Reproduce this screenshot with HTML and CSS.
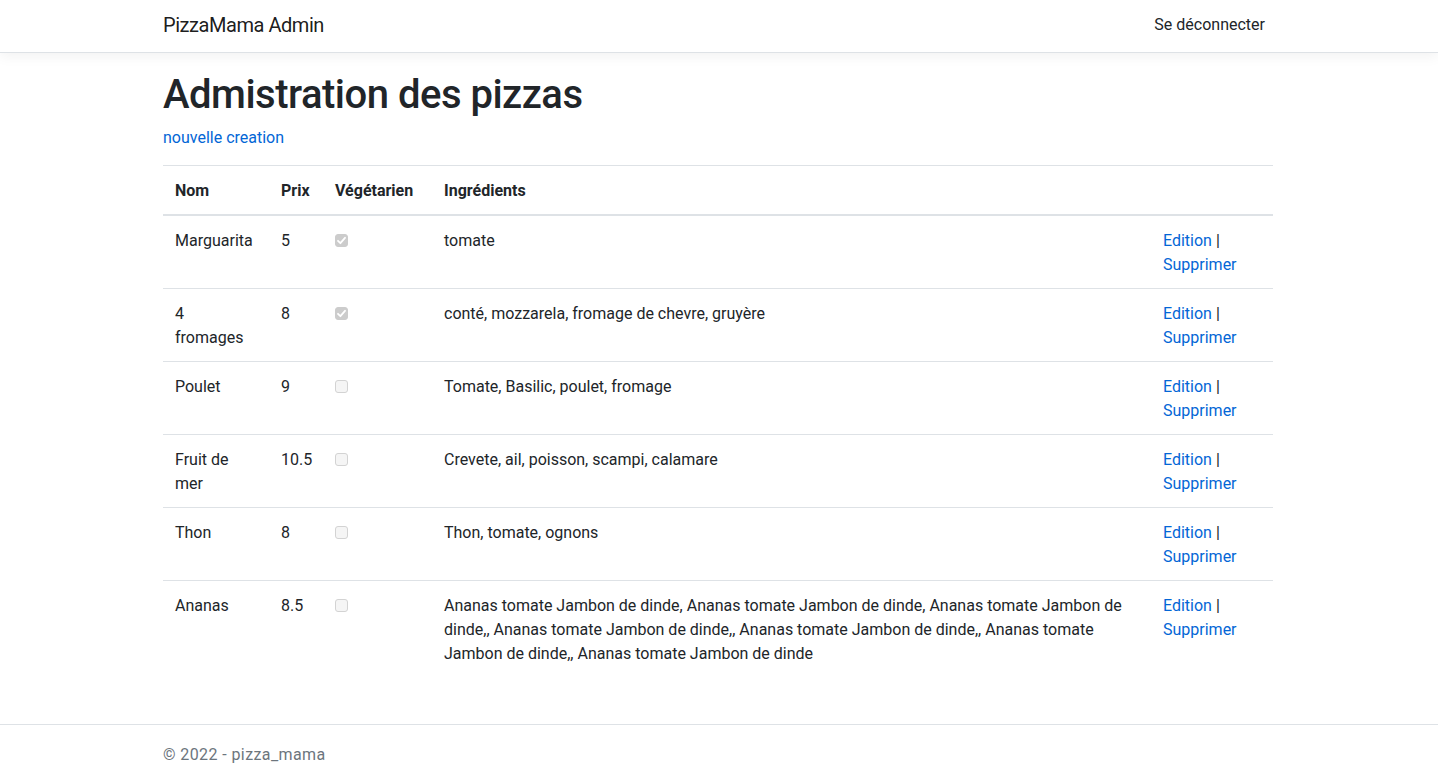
FILE: index.html
```html
<!DOCTYPE html>
<html lang="fr">
<head>
<meta charset="utf-8">
<title>PizzaMama Admin</title>
<link rel="stylesheet" href="styles.css">
</head>
<body>
<header class="navbar">
  <div class="container nav-inner">
    <a class="brand" href="#">PizzaMama Admin</a>
    <a class="nav-link" href="#">Se déconnecter</a>
  </div>
</header>
<main class="container main">
  <h1 class="title">Admistration des pizzas</h1>
  <p class="create"><a href="#">nouvelle creation</a></p>
  <table class="table">
    <colgroup>
      <col class="c-nom"><col class="c-prix"><col class="c-veg"><col class="c-ing"><col class="c-act">
    </colgroup>
    <thead>
      <tr><th>Nom</th><th>Prix</th><th>Végétarien</th><th>Ingrédients</th><th></th></tr>
    </thead>
    <tbody>
      <tr>
        <td>Marguarita</td><td>5</td>
        <td><input class="check" type="checkbox" checked disabled></td>
        <td>tomate</td>
        <td><a href="#">Edition</a> |<br><a href="#">Supprimer</a></td>
      </tr>
      <tr>
        <td>4 fromages</td><td>8</td>
        <td><input class="check" type="checkbox" checked disabled></td>
        <td>conté, mozzarela, fromage de chevre, gruyère</td>
        <td><a href="#">Edition</a> |<br><a href="#">Supprimer</a></td>
      </tr>
      <tr>
        <td>Poulet</td><td>9</td>
        <td><input class="check" type="checkbox" disabled></td>
        <td>Tomate, Basilic, poulet, fromage</td>
        <td><a href="#">Edition</a> |<br><a href="#">Supprimer</a></td>
      </tr>
      <tr>
        <td>Fruit de mer</td><td>10.5</td>
        <td><input class="check" type="checkbox" disabled></td>
        <td>Crevete, ail, poisson, scampi, calamare</td>
        <td><a href="#">Edition</a> |<br><a href="#">Supprimer</a></td>
      </tr>
      <tr>
        <td>Thon</td><td>8</td>
        <td><input class="check" type="checkbox" disabled></td>
        <td>Thon, tomate, ognons</td>
        <td><a href="#">Edition</a> |<br><a href="#">Supprimer</a></td>
      </tr>
      <tr>
        <td>Ananas</td><td>8.5</td>
        <td><input class="check" type="checkbox" disabled></td>
        <td>Ananas tomate Jambon de dinde, Ananas tomate Jambon de dinde, Ananas tomate Jambon de dinde,, Ananas tomate Jambon de dinde,, Ananas tomate Jambon de dinde,, Ananas tomate Jambon de dinde,, Ananas tomate Jambon de dinde</td>
        <td><a href="#">Edition</a> |<br><a href="#">Supprimer</a></td>
      </tr>
    </tbody>
  </table>
</main>
<footer class="footer">
  <div class="container">© 2022 - pizza_mama</div>
</footer>
</body>
</html>
```

FILE: styles.css
```css
* { box-sizing: border-box; }
html, body { margin: 0; padding: 0; }
body {
  font-family: Roboto, Inter, "Liberation Sans", sans-serif;
  font-size: 16px;
  line-height: 1.5;
  color: #212529;
  background: #fff;
  min-height: 100vh;
  display: flex;
  flex-direction: column;
}
a { color: #0366d6; text-decoration: none; }
.container {
  width: 1140px;
  margin: 0 auto;
  padding: 0 16px 0 14px;
}
.navbar {
  height: 53px;
  border-bottom: 1px solid #dee2e6;
  box-shadow: 0 4px 12px rgba(0, 0, 0, 0.05);
  background: #fff;
}
.nav-inner {
  height: 52px;
  display: flex;
  align-items: center;
  justify-content: space-between;
}
.brand {
  font-size: 20px;
  letter-spacing: -0.45px;
  color: rgba(0, 0, 0, 0.9);
  line-height: 30px;
  padding-bottom: 2px;
}
.nav-link {
  color: #212529;
  padding: 0 8px 2px 8px;
}
.main {
  flex: 1;
  padding-top: 18px;
  padding-bottom: 14px;
}
.title {
  font-size: 40px;
  line-height: 48px;
  font-weight: 500;
  letter-spacing: -0.5px;
  margin: 0 0 7px 0;
}
.create { margin: 0 0 15px 0; }
.table {
  width: 100%;
  border-collapse: collapse;
  table-layout: fixed;
}
.c-nom { width: 106px; }
.c-prix { width: 54px; }
.c-veg { width: 109px; }
.c-ing { width: 719px; }
.c-act { width: 122px; }
.table th, .table td {
  padding: 13px 12px 11px 12px;
  vertical-align: top;
  text-align: left;
  border-top: 1px solid #dee2e6;
}
.table td:first-child { padding-right: 14px; }
.table th {
  font-weight: 700;
  border-bottom: 2px solid #dee2e6;
}
.check {
  appearance: none;
  -webkit-appearance: none;
  width: 13px;
  height: 13px;
  margin: 5px 0 0 0;
  display: block;
  border: 1px solid #d3d3d3;
  border-radius: 3px;
  background: #f5f5f5;
}
.check:checked {
  background: #cccccc url("data:image/svg+xml;utf8,<svg xmlns='http://www.w3.org/2000/svg' viewBox='0 0 13 13'><path d='M3 6.8 L5.4 9.2 L10 3.8' fill='none' stroke='white' stroke-width='1.8' stroke-linecap='round' stroke-linejoin='round'/></svg>") no-repeat center / 13px 13px;
  border-color: #cccccc;
}
.footer {
  height: 60px;
  border-top: 1px solid #dee2e6;
  line-height: 59px;
  color: #6c757d;
  letter-spacing: 0.4px;
}
```
